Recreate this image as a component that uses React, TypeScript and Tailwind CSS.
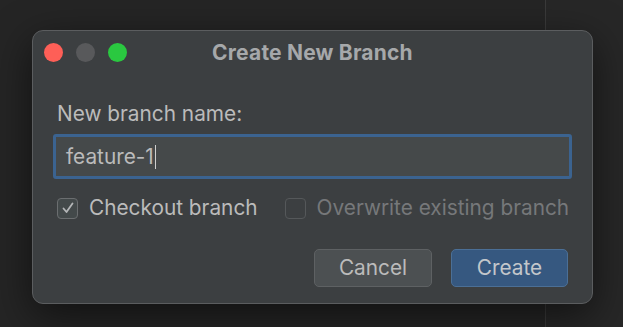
import React from "react";

function Checkbox({ checked, disabled }: { checked?: boolean; disabled?: boolean }) {
  return (
    <span
      className={
        "grid h-[21px] w-[21px] place-items-center rounded-[4px] border " +
        (disabled ? "border-[#55585a] bg-[#3c3f41]" : "border-[#6b6e70] bg-[#43494a]")
      }
    >
      {checked && (
        <svg width="14" height="14" viewBox="0 0 14 14" fill="none">
          <path d="M2.5 7.5 L5.5 11 L11.5 2.5" stroke="#b4b6b8" strokeWidth="1.8" strokeLinecap="round" strokeLinejoin="round" />
        </svg>
      )}
    </span>
  );
}

export default function App() {
  return (
    <div
      className="relative h-[327px] w-[623px] overflow-hidden bg-[#252525] text-[#bbbbbb]"
      style={{ fontFamily: "Inter, 'Noto Sans', sans-serif" }}
    >
      {/* editor split behind the dialog */}
      <div className="flex h-full">
        <div className="w-[545px] bg-[#252525]" />
        <div className="flex-1 border-l border-[#3a3a3a] bg-[#272727]" />
      </div>

      <div className="absolute left-[32px] top-[30px] flex h-[274px] w-[561px] flex-col rounded-[11px] border border-[#5b5d5f] bg-[#3c3f41] shadow-[0_12px_40px_rgba(0,0,0,0.55)]">
        <div className="relative flex h-[43px] items-center justify-center">
          <div className="absolute left-[11px] top-[12px] flex gap-[13px]">
            <span className="h-[19px] w-[19px] rounded-full bg-[#fe5f57]" />
            <span className="h-[19px] w-[19px] rounded-full bg-[#58595b]" />
            <span className="h-[19px] w-[19px] rounded-full bg-[#2ac840]" />
          </div>
          <span className="text-[21px] font-bold leading-6 tracking-[0.2px] text-[#a6a8aa]">Create New Branch</span>
        </div>

        <div className="flex flex-1 flex-col px-[20px]">
          <div className="ml-[4px] mt-[28px] text-[20.8px] leading-6">New branch name:</div>

          <div className="mt-[8px] flex h-[45px] items-center rounded-[3px] border-[3px] border-[#3b6390] bg-[#45494a] pl-[10px] text-[20.8px]">
            <span>feature-1</span>
            <span className="ml-[1px] h-[24px] w-[1.5px] bg-[#cfcfcf]" />
          </div>

          <div className="ml-[4px] mt-[17px] flex items-center text-[20.8px] leading-6">
            <Checkbox checked />
            <span className="ml-[11px]">Checkout branch</span>
            <span className="ml-[27px]">
              <Checkbox disabled />
            </span>
            <span className="ml-[11px] text-[#76787a]">Overwrite existing branch</span>
          </div>

          <div className="mr-[4px] mt-[29px] flex justify-end gap-[19px] text-[20.8px]">
            <button className="h-[38px] w-[118px] rounded-[5px] border border-[#5e6163] bg-[#4c5052] text-[#bbbbbb]">
              Cancel
            </button>
            <button className="h-[38px] w-[117px] rounded-[5px] border border-[#4b6f96] bg-[#365880] text-[#c3c7cb]">
              Create
            </button>
          </div>
        </div>
      </div>
    </div>
  );
}
